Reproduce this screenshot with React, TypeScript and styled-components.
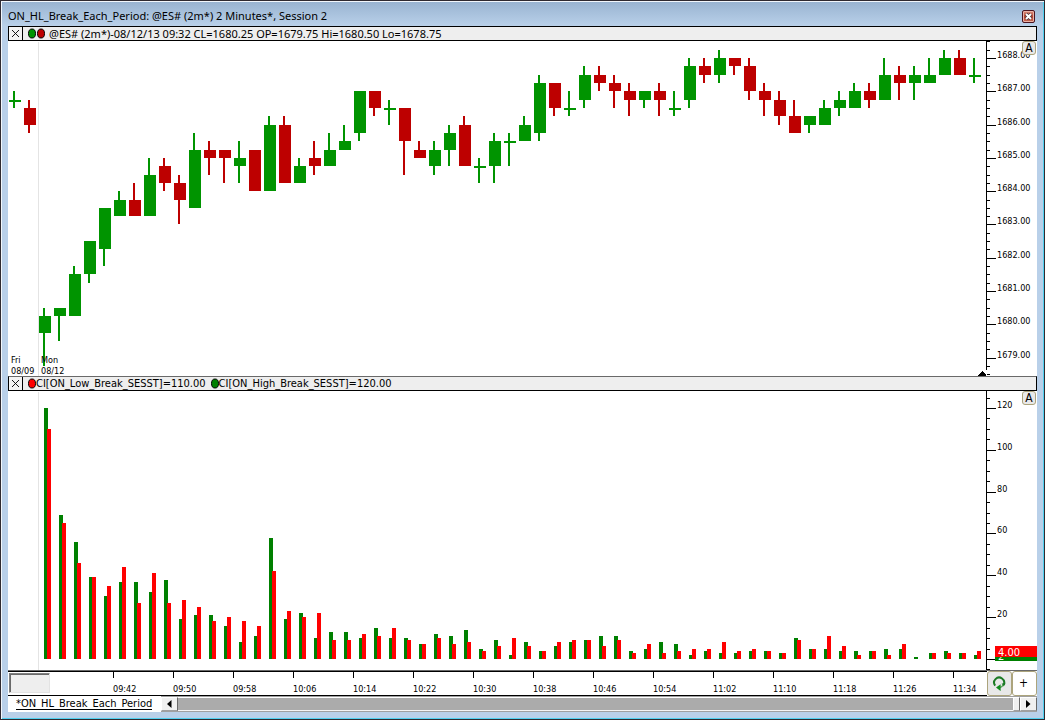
import React from "react";
import styled, { createGlobalStyle } from "styled-components";

const Global = createGlobalStyle`
  *, *::before, *::after { box-sizing: border-box; }
  body { margin: 0; }
  button { font: inherit; color: inherit; padding: 0; margin: 0; border-radius: 0; }
`;

const ui = `"DejaVu Sans Condensed", "Noto Sans", sans-serif`;
const caption = `"Noto Sans", "DejaVu Sans Condensed", sans-serif`;

/* ---------- data ---------- */

// Candles in quarter points below 1688.00: [high, bodyTop, bodyBottom, low, rising]
type Candle = [number, number, number, number, 0 | 1];
const candles: Candle[] = [
  [4, 5, 5, 6, 1], [5, 6, 8, 9, 0], [30, 31, 33, 37, 1], [30, 30, 31, 34, 1], [25, 26, 31, 31, 1],
  [22, 22, 26, 27, 1], [18, 18, 23, 25, 1], [16, 17, 19, 19, 1], [15, 17, 19, 19, 0], [12, 14, 19, 19, 1],
  [12, 13, 15, 16, 0], [14, 15, 17, 20, 0], [9, 11, 18, 18, 1], [10, 11, 12, 14, 0], [11, 11, 12, 15, 0],
  [10, 12, 13, 15, 1], [11, 11, 16, 16, 0], [7, 8, 16, 16, 1], [7, 8, 15, 15, 0], [12, 13, 15, 15, 1],
  [10, 12, 13, 14, 0], [9, 11, 13, 13, 1], [8, 10, 11, 11, 1], [4, 4, 9, 10, 1], [4, 4, 6, 7, 0],
  [5, 6, 6, 8, 1], [6, 6, 10, 14, 0], [10, 11, 12, 12, 0], [10, 11, 13, 14, 1], [8, 9, 11, 13, 1],
  [7, 8, 13, 13, 0], [12, 13, 13, 15, 1], [9, 10, 13, 15, 1], [9, 10, 10, 13, 1], [7, 8, 10, 10, 1],
  [2, 3, 9, 10, 1], [3, 3, 6, 7, 0], [4, 6, 6, 7, 1], [1, 2, 5, 6, 1], [1, 2, 3, 4, 0],
  [2, 3, 4, 6, 0], [3, 4, 5, 7, 0], [4, 4, 5, 6, 1], [3, 4, 5, 7, 0], [4, 6, 6, 7, 1],
  [0, 1, 5, 6, 1], [0, 1, 2, 3, 0], [-1, 0, 2, 3, 1], [0, 0, 1, 2, 0], [0, 1, 4, 5, 0],
  [3, 4, 5, 7, 0], [4, 5, 7, 8, 0], [5, 7, 9, 9, 0], [7, 7, 8, 9, 1], [5, 6, 8, 8, 1],
  [4, 5, 6, 7, 1], [3, 4, 6, 6, 1], [3, 4, 5, 6, 0], [0, 2, 5, 5, 1], [1, 2, 3, 5, 0],
  [1, 2, 3, 5, 1], [0, 2, 3, 3, 1], [-1, 0, 2, 2, 1], [-1, 0, 2, 2, 0], [0, 2, 2, 3, 1],
];

// Break counts per bar: [high breaks, low breaks]
const breaks: [number, number][] = [
  [120, 110], [69, 65], [56, 46], [39, 39], [30, 35], [37, 44], [37, 27], [32, 41], [38, 27], [19, 28],
  [21, 25], [21, 18], [16, 20], [8, 18], [11, 16], [58, 42], [19, 23], [22, 20], [10, 22], [13, 9],
  [13, 9], [10, 12], [15, 11], [10, 15], [10, 9], [7, 7], [12, 10], [11, 7], [14, 8], [5, 4],
  [9, 6], [2, 10], [8, 6], [4, 4], [6, 8], [8, 9], [9, 9], [11, 6], [11, 9], [4, 3],
  [5, 7], [8, 3], [7, 4], [2, 5], [4, 5], [3, 8], [3, 4], [4, 5], [4, 4], [3, 3],
  [10, 9], [5, 5], [5, 11], [4, 6], [4, 2], [4, 4], [5, 2], [5, 7], [1, 0], [3, 3],
  [4, 3], [3, 3], [2, 4],
];

const times = ["09:42", "09:50", "09:58", "10:06", "10:14", "10:22", "10:30", "10:38",
  "10:46", "10:54", "11:02", "11:10", "11:18", "11:26", "11:34"];

const STEP = 15;
const priceY = (q: number) => Math.round(17 + q * 8.324);
const countY = (v: number) => Math.round(268 - v * 2.0917);
const range = (from: number, to: number) => Array.from({ length: to - from + 1 }, (_, i) => from + i);

/* ---------- window frame ---------- */

const Frame = styled.main`
  display: flex;
  flex-direction: column;
  min-height: 100vh;
  padding: 1px 7px 7px;
  border: 1px solid #2f2a30;
  background: #b9d0e9;
  box-shadow: inset 1px 1px 0 #f2f7fc, inset -1px -1px 0 #4fd0f0;
  color: #000;
  font: 11px/13px ${ui};
`;

const TitleBar = styled.header`
  display: flex;
  align-items: center;
  justify-content: space-between;
  height: 24px;
  margin: 0 -6px;
  padding: 4px 8px 0 6px;
  background: linear-gradient(#99b4d1, #b9d0e9);
`;

const Title = styled.h1`
  margin: 0;
  font: 400 11px/16px ${caption};
  color: #000;
`;

const CloseButton = styled.button`
  display: flex;
  align-items: center;
  justify-content: center;
  width: 13px;
  height: 13px;
  border: 1px solid #4a1420;
  border-radius: 2px;
  box-shadow: inset 0 0 0 1px #e9b1a6;
  background: linear-gradient(#dc9484, #b9432e 50%, #c56a55);
`;

const Content = styled.div`
  display: flex;
  flex: 1;
  flex-direction: column;
  min-width: 0;
  background: #fff;
`;

/* ---------- chart panes ---------- */

const StudyBar = styled.div<{ $soft?: boolean }>`
  display: flex;
  height: 15px;
  border: 1px solid #000;
  border-top-color: ${(p) => (p.$soft ? "#696969" : "#000")};
  background: #eee;
  white-space: nowrap;
`;

const BarClose = styled.button`
  display: flex;
  align-items: center;
  justify-content: center;
  width: 14px;
  border: 0;
  border-right: 1px solid #000;
  background: #f4f4f4;
`;

const Legend = styled.div<{ $caption?: boolean }>`
  display: flex;
  align-items: center;
  gap: ${(p) => (p.$caption ? 1 : 0)}px;
  padding-left: 5px;
  font: 11px/13px ${(p) => (p.$caption ? caption : ui)};
`;

const Entry = styled.span<{ $left?: number }>`
  padding: 0 5px 0 ${(p) => p.$left ?? 0}px;
`;

const Pane = styled.section<{ $height: number }>`
  position: relative;
  display: flex;
  flex: 1 0 ${(p) => p.$height}px;
`;

const Plot = styled.svg`
  display: block;
  flex: 1;
  min-width: 0;
  overflow: hidden;
`;

const Scale = styled.svg`
  display: block;
  flex: none;
  width: 51px;
`;

const PlotText = styled.text`
  font: 9px ${ui};
  fill: #000;
`;

const AutoButton = styled.button`
  position: absolute;
  top: 0;
  right: 1px;
  width: 14px;
  height: 14px;
  border: 1px solid #aca47c;
  border-radius: 3px;
  background: #e9e9e9;
  font: 12px/12px ${ui};
`;

const Badges = styled.div`
  position: absolute;
  top: 255px;
  right: 0;
  width: 42px;
  height: 15px;
  background: #008000;
  color: #fff;
  font: 11px/13px ${ui};
`;

const LowBadge = styled.div`
  position: relative;
  z-index: 1;
  height: 11px;
  padding-left: 3px;
  background: #f00;
`;

const HighBadge = styled.div`
  margin-top: -8px;
  padding: 1px 0 0 3px;
`;

/* ---------- bottom bars ---------- */

const TimeBar = styled.div`
  display: flex;
  height: 26px;
  border-top: 1px solid #696969;
`;

const TimeScale = styled.div`
  display: flex;
  flex: 1;
  min-width: 0;
  border-top: 1px solid #000;
  border-bottom: 1px solid #000;
`;

const Well = styled.div`
  width: 41px;
  height: 20px;
  margin: 1px 1px 0 1px;
  border: 1px solid #808080;
  border-right-color: #e3e3e3;
  border-bottom-color: #e3e3e3;
  background: #eee;
  box-shadow: inset 1px 1px 0 #696969;
`;

const ToolButton = styled.button<{ $shaded?: boolean }>`
  display: flex;
  align-items: center;
  justify-content: center;
  width: 25px;
  padding: 0 2px 2px 0;
  border: 1px solid #aca47c;
  border-radius: 3px;
  background: ${(p) => (p.$shaded ? "#e8e8e8" : "#fff")};
  font: 12px/14px ${ui};
`;

const TabRow = styled.div`
  display: flex;
  height: 16px;
`;

const SheetTab = styled.a`
  padding: 0 9px 0 8px;
  color: #000;
  line-height: 15px;
  text-decoration: none;
  white-space: nowrap;
`;

const SheetName = styled.span`
  display: block;
  height: 14px;
  border-bottom: 1px solid #000;
`;

const Scroller = styled.div`
  display: flex;
  flex: 1;
  border: 1px solid #a0a0a0;
  border-width: 1px 0;
  background: #ababab;
  box-shadow: inset 0 1px 0 #fff, inset 0 -1px 0 #f4f4f4;
`;

const ScrollPiece = styled.button<{ $width: number }>`
  display: flex;
  align-items: center;
  justify-content: center;
  width: ${(p) => p.$width}px;
  border: 1px solid #fff;
  border-right-color: #696969;
  border-bottom-color: #a0a0a0;
  background: #f0f0f0;
`;

const Track = styled.div`
  flex: 1;
`;

/* ---------- pieces ---------- */

const CrossIcon = () => (
  <svg width="7" height="7" viewBox="0 0 7 7">
    <path d="M0 0L7 7M7 0L0 7" stroke="#000" strokeWidth="0.9" />
  </svg>
);

const Dot = ({ color }: { color: string }) => (
  <svg width="8" height="11" viewBox="0 0 8 11">
    <ellipse cx="4" cy="5.5" rx="3.5" ry="4.5" fill={color} stroke="#000" />
  </svg>
);

const Arrow = ({ right }: { right?: boolean }) => (
  <svg width="5" height="8" viewBox="0 0 5 8">
    <path d={right ? "M0 0L4.5 4L0 8Z" : "M4.5 0L0 4L4.5 8Z"} fill="#000" />
  </svg>
);

const PricePlot = () => (
  <Plot shapeRendering="crispEdges" role="img" aria-label="Price">
    <rect x="30" y="1" width="1" height="100%" fill="#e4e4e4" />
    {candles.map(([high, top, bottom, low, up], i) => {
      const x = 1 + i * STEP;
      const y = priceY(top);
      return (
        <g key={i} fill={up ? "#009400" : "#bd0000"}>
          <rect x={x + 4} y={priceY(high)} width="2" height={priceY(low) - priceY(high)} />
          <rect x={x} y={y} width="12" height={Math.max(2, priceY(bottom) - y)} />
        </g>
      );
    })}
    <PlotText x="3" y="322">Fri</PlotText>
    <PlotText x="3" y="333">08/09</PlotText>
    <PlotText x="33" y="322">Mon</PlotText>
    <PlotText x="33" y="333">08/12</PlotText>
    <path d="M970 335L974.5 330L979 335Z" fill="#000" />
  </Plot>
);

const PriceScale = () => (
  <Scale shapeRendering="crispEdges">
    <rect x="0" y="0" width="1" height="329" />
    {range(-2, 38).map((q) => (
      <rect key={q} x="1" y={priceY(q)} width={q % 4 === 0 ? 9 : 3} height="1" />
    ))}
    {range(0, 9).map((n) => (
      <PlotText key={n} x="11" y={priceY(n * 4)}>{(1688 - n).toFixed(2)}</PlotText>
    ))}
  </Scale>
);

const BreakPlot = () => (
  <Plot shapeRendering="crispEdges" role="img" aria-label="Break counts">
    <rect x="30" y="1" width="1" height="100%" fill="#e4e4e4" />
    {breaks.map(([high, low], i) => {
      const x = 36 + i * STEP;
      return (
        <g key={i}>
          <rect x={x} y={countY(high)} width="4" height={268 - countY(high)} fill="#008000" />
          <rect x={x + 3} y={countY(low)} width="4" height={268 - countY(low)} fill="#f00" />
        </g>
      );
    })}
  </Plot>
);

const BreakScale = () => (
  <Scale shapeRendering="crispEdges">
    <rect x="0" y="0" width="1" height="279" />
    {range(-1, 25).map((n) => (
      <rect key={n} x="1" y={countY(n * 5)} width={n % 4 === 0 ? 9 : 3} height="1" />
    ))}
    {range(1, 6).map((n) => (
      <PlotText key={n} x="11" y={countY(n * 20)}>{n * 20}</PlotText>
    ))}
  </Scale>
);

const TimePlot = () => (
  <Plot shapeRendering="crispEdges" role="img" aria-label="Time">
    {times.map((t, i) => (
      <g key={t}>
        <rect x={62 + i * 60} y="0" width="1" height="6" />
        <PlotText x={62 + i * 60} y="20">{t}</PlotText>
      </g>
    ))}
  </Plot>
);

export default function App() {
  return (
    <>
      <Global />
      <Frame>
        <TitleBar>
          <Title>ON_HL_Break_Each_Period: @ES# (2m*) 2 Minutes*, Session 2</Title>
          <CloseButton aria-label="Close window">
            <svg width="9" height="9" viewBox="0 0 9 9">
              <path d="M2 2L7 7M7 2L2 7" stroke="#4a3038" strokeWidth="3.4" />
              <path d="M2 2L7 7M7 2L2 7" stroke="#fff" strokeWidth="2" />
            </svg>
          </CloseButton>
        </TitleBar>
        <Content>
          <StudyBar>
            <BarClose aria-label="Close price pane"><CrossIcon /></BarClose>
            <Legend $caption>
              <Dot color="#009400" />
              <Dot color="#bd0000" />
              <Entry $left={3}>@ES# (2m*)-08/12/13 09:32 CL=1680.25 OP=1679.75 Hi=1680.50 Lo=1678.75</Entry>
            </Legend>
          </StudyBar>
          <Pane $height={335}>
            <PricePlot />
            <PriceScale />
            <AutoButton>A</AutoButton>
          </Pane>
          <StudyBar $soft>
            <BarClose aria-label="Close study pane"><CrossIcon /></BarClose>
            <Legend>
              <Dot color="#f00" />
              <Entry>CI[ON_Low_Break_SESST]=110.00</Entry>
              <Dot color="#008000" />
              <Entry>CI[ON_High_Break_SESST]=120.00</Entry>
            </Legend>
          </StudyBar>
          <Pane $height={279}>
            <BreakPlot />
            <BreakScale />
            <AutoButton>A</AutoButton>
            <Badges>
              <LowBadge>4.00</LowBadge>
              <HighBadge>2</HighBadge>
            </Badges>
          </Pane>
          <TimeBar>
            <TimeScale>
              <Well />
              <TimePlot />
            </TimeScale>
            <ToolButton $shaded aria-label="Refresh">
              <svg width="14" height="16" viewBox="0 0 14 16">
                <path d="M3.2 10.6A5 5 0 1 1 11.6 9.8" fill="none" stroke="#1b7a24" strokeWidth="2" />
                <path d="M13.6 8.6L9.6 8.6L11.6 11.6Z" fill="#1b7a24" />
                <path d="M11.2 10Q10 12.2 7.5 12.6" fill="none" stroke="#4f9a50" strokeWidth="1.4" />
                <path d="M8.6 9.2V16L4 12.6Z" fill="#0f8a1c" />
              </svg>
            </ToolButton>
            <ToolButton>+</ToolButton>
          </TimeBar>
          <TabRow>
            <SheetTab href="#sheet"><SheetName>*ON_HL_Break_Each_Period</SheetName></SheetTab>
            <Scroller>
              <ScrollPiece $width={17} aria-label="Scroll left"><Arrow /></ScrollPiece>
              <Track />
              <ScrollPiece $width={7} aria-label="Scroll thumb" />
              <ScrollPiece $width={17} aria-label="Scroll right"><Arrow right /></ScrollPiece>
            </Scroller>
          </TabRow>
        </Content>
      </Frame>
    </>
  );
}
